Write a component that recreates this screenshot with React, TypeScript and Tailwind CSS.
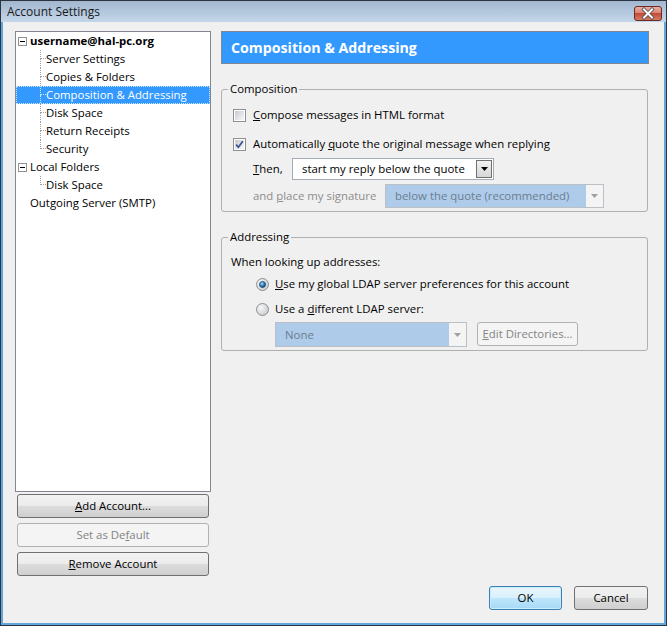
import React from 'react';

const ui = "font-['Open_Sans','Liberation_Sans',sans-serif] text-[11.4px] leading-[16px]";

function Checkbox({ checked }: { checked?: boolean }) {
  return (
    <span className="flex h-[13px] w-[13px] shrink-0 items-center justify-center border border-[#8e8f8f] bg-white">
      <span className="flex h-[9px] w-[9px] items-center justify-center bg-[linear-gradient(135deg,#c6cacf,#f7f7f7)]">
        {checked && (
          <svg width="9" height="9" viewBox="0 0 9 9">
            <path d="M1.2 4.6 L3.4 7.2 L7.8 1.2" fill="none" stroke="#3b4f92" strokeWidth="1.7" />
          </svg>
        )}
      </span>
    </span>
  );
}

function Radio({ checked }: { checked?: boolean }) {
  return (
    <svg width="13" height="13" viewBox="0 0 13 13" className="shrink-0">
      <defs>
        <radialGradient id="rbg" cx="0.35" cy="0.35" r="0.7">
          <stop offset="0" stopColor="#f7f7f7" />
          <stop offset="1" stopColor="#c9cccf" />
        </radialGradient>
        <radialGradient id="rdot" cx="0.4" cy="0.35" r="0.65">
          <stop offset="0" stopColor="#a7e0fb" />
          <stop offset="0.5" stopColor="#3a8fd0" />
          <stop offset="1" stopColor="#0d3f7a" />
        </radialGradient>
      </defs>
      <circle cx="6.5" cy="6.5" r="6" fill="url(#rbg)" stroke="#8e8f8f" />
      {checked && <circle cx="6.5" cy="6.5" r="3" fill="url(#rdot)" stroke="#1b4470" strokeWidth="0.8" />}
    </svg>
  );
}

function Arrow({ color }: { color: string }) {
  return (
    <svg width="7" height="4" viewBox="0 0 7 4">
      <path d="M0 0 H7 L3.5 4 Z" fill={color} />
    </svg>
  );
}

function Button({
  children,
  disabled,
  isDefault,
  className = '',
}: {
  children: React.ReactNode;
  disabled?: boolean;
  isDefault?: boolean;
  className?: string;
}) {
  let look =
    'border-[#707070] bg-[linear-gradient(#f2f2f2_0%,#ebebeb_50%,#dddddd_50%,#cfcfcf_100%)] text-black';
  if (disabled) look = 'border-[#adb2b5] bg-[#f4f4f4] text-[#838383]';
  if (isDefault)
    look =
      'border-[#3c7fb1] bg-[linear-gradient(#eaf6fd_0%,#d9f0fc_50%,#bee6fd_50%,#a7d9f5_100%)] text-black shadow-[inset_0_0_0_1px_#c7ecfd]';
  return (
    <div className={`flex h-[24px] items-center justify-center rounded-[3px] border ${look} ${className}`}>
      {children}
    </div>
  );
}

function TreeBranch({ last, light }: { last?: boolean; light?: boolean }) {
  const c = light ? 'border-[#cfe6ff]' : 'border-[#a0a0a0]';
  return (
    <div className="ml-[24px] flex w-[6px] flex-col">
      <div className={`h-[9px] border-b border-l border-dotted ${c}`} />
      {!last && <div className={`h-[9px] border-l border-dotted ${c}`} />}
    </div>
  );
}

function Minus() {
  return (
    <span className="ml-[2px] flex h-[9px] w-[9px] items-center justify-center border border-[#919191] bg-white">
      <span className="h-px w-[5px] bg-black" />
    </span>
  );
}

function AccountTree() {
  const children = ['Server Settings', 'Copies & Folders', 'Composition & Addressing', 'Disk Space', 'Return Receipts', 'Security'];
  return (
    <div className="h-[461px] w-[196px] border border-[#828790] bg-white">
      <div className="flex h-[18px] items-center">
        <Minus />
        <span className="ml-[3px] font-bold">username@hal-pc.org</span>
      </div>
      {children.map((name, i) => {
        const selected = name === 'Composition & Addressing';
        return (
          <div
            key={name}
            className={`flex h-[18px] ${selected ? 'border border-dotted border-[#cfe6ff] bg-[#3399ff] text-white' : ''}`}
          >
            <div className={selected ? '-ml-px -mt-px flex' : 'flex'}>
              <TreeBranch last={i === children.length - 1} light={selected} />
            </div>
            <span className="flex items-center">{name}</span>
          </div>
        );
      })}
      <div className="flex h-[18px] items-center">
        <Minus />
        <span className="ml-[3px]">Local Folders</span>
      </div>
      <div className="flex h-[18px]">
        <TreeBranch last />
        <span className="flex items-center">Disk Space</span>
      </div>
      <div className="flex h-[18px] items-center pl-[14px]">Outgoing Server (SMTP)</div>
    </div>
  );
}

function CloseButton() {
  return (
    <svg width="28" height="15" viewBox="0 0 28 15">
      <defs>
        <linearGradient id="cb" x1="0" y1="0" x2="0" y2="1">
          <stop offset="0" stopColor="#eab3a6" />
          <stop offset="0.45" stopColor="#d98573" />
          <stop offset="0.5" stopColor="#c34a35" />
          <stop offset="1" stopColor="#d9806a" />
        </linearGradient>
      </defs>
      <rect x="0.5" y="0.5" width="27" height="14" rx="2.5" fill="url(#cb)" stroke="#6a2a22" />
      <path d="M10 3.5 L18 11.5 M18 3.5 L10 11.5" stroke="#4a4a4a" strokeWidth="3.6" strokeLinecap="square" />
      <path d="M10 3.5 L18 11.5 M18 3.5 L10 11.5" stroke="#ffffff" strokeWidth="2" strokeLinecap="square" />
    </svg>
  );
}

export default function App() {
  return (
    <div className={`${ui} flex h-[626px] w-[667px] flex-col border border-[#2c3440] bg-[#5ea6dc] px-[2px] pb-[2px] text-black`}>
      {/* title bar */}
      <div className="-mx-[2px] flex h-[21px] shrink-0 items-center justify-between bg-[linear-gradient(#a2b7cf,#c3d6ea)] pl-[6px] pr-[4px]">
        <span className="text-[12px] text-[#1a1a1a]">Account Settings</span>
        <div className="mt-[3px]">
          <CloseButton />
        </div>
      </div>

      {/* client area */}
      <div className="flex flex-1 flex-col bg-[#f0f0f0]">
        <div className="flex pl-[12px] pt-[9px]">
          <div className="flex w-[196px] flex-col">
            <AccountTree />
            <div className="ml-[2px] mt-[2px] flex w-[192px] flex-col gap-[5px]">
              <Button>
                <span>
                  <u>A</u>dd Account...
                </span>
              </Button>
              <Button disabled>
                <span>
                  Set as De<u>f</u>ault
                </span>
              </Button>
              <Button>
                <span>
                  <u>R</u>emove Account
                </span>
              </Button>
            </div>
          </div>

          <div className="ml-[10px] flex w-[428px] flex-col">
            <div className="flex h-[33px] items-center border border-[#828790] bg-[#3399ff] pl-[9px] text-[14.2px] font-bold text-white">
              Composition &amp; Addressing
            </div>

            <fieldset className="mt-[17px] w-[427px] rounded-[3px] border border-[#b0b0b0] pb-[3px]">
              <legend className="ml-[6px] px-[2px] leading-[16px]">Composition</legend>
              <div className="pl-[11px]">
                <div className="mt-[9px] flex h-[18px] items-center gap-[7px]">
                  <Checkbox />
                  <span>
                    <u>C</u>ompose messages in HTML format
                  </span>
                </div>
                <div className="mt-[11px] flex h-[18px] items-center gap-[7px]">
                  <Checkbox checked />
                  <span>
                    Automatically <u>q</u>uote the original message when replying
                  </span>
                </div>
                <div className="mt-[5px] flex items-center pl-[20px]">
                  <span className="w-[39px]">
                    <u>T</u>hen,
                  </span>
                  <div className="flex h-[22px] w-[202px] items-center border border-[#a5acb5] bg-white p-px">
                    <span className="flex-1 pl-[8px]">start my reply below the quote</span>
                    <div className="flex h-[18px] w-[16px] items-center justify-center border border-[#707070] bg-[linear-gradient(#f2f2f2,#d6d6d6)]">
                      <Arrow color="#000" />
                    </div>
                  </div>
                </div>
                <div className="mt-[4px] flex items-center pl-[20px]">
                  <span className="w-[132px] text-[#8d8d8d]">
                    and <u>p</u>lace my signature
                  </span>
                  <div className="flex h-[24px] w-[219px] border border-[#bcc0c4] bg-[#aecbea]">
                    <span className="flex flex-1 items-center pl-[9px] text-[#6d7d90]">below the quote (recommended)</span>
                    <div className="flex w-[17px] items-center justify-center bg-[#f4f4f4]">
                      <Arrow color="#a0a0a0" />
                    </div>
                  </div>
                </div>
              </div>
            </fieldset>

            <fieldset className="mt-[17px] w-[427px] rounded-[3px] border border-[#b0b0b0] pb-[3px]">
              <legend className="ml-[6px] px-[2px] leading-[16px]">Addressing</legend>
              <div className="pl-[9px]">
                <div className="mt-[8px] flex h-[18px] items-center">When looking up addresses:</div>
                <div className="mt-[4px] flex h-[18px] items-center gap-[6px] pl-[25px]">
                  <Radio checked />
                  <span>
                    <u>U</u>se my global LDAP server preferences for this account
                  </span>
                </div>
                <div className="mt-[7px] flex h-[18px] items-center gap-[6px] pl-[25px]">
                  <Radio />
                  <span>
                    Use a <u>d</u>ifferent LDAP server:
                  </span>
                </div>
                <div className="mt-[4px] flex items-start gap-[10px] pl-[44px]">
                  <div className="flex h-[25px] w-[192px] border border-[#bcc0c4] bg-[#aecbea]">
                    <span className="flex flex-1 items-center pl-[9px] text-[#6d7d90]">None</span>
                    <div className="flex w-[17px] items-center justify-center bg-[#f4f4f4]">
                      <Arrow color="#a0a0a0" />
                    </div>
                  </div>
                  <Button disabled className="w-[101px] text-[#6a6a6a]">
                    <span>
                      <u>E</u>dit Directories...
                    </span>
                  </Button>
                </div>
              </div>
            </fieldset>
          </div>
        </div>

        <div className="mt-auto flex justify-end gap-[12px] pb-[13px] pr-[16px]">
          <Button isDefault className="w-[73px]">
            OK
          </Button>
          <Button className="w-[74px]">Cancel</Button>
        </div>
      </div>
    </div>
  );
}
